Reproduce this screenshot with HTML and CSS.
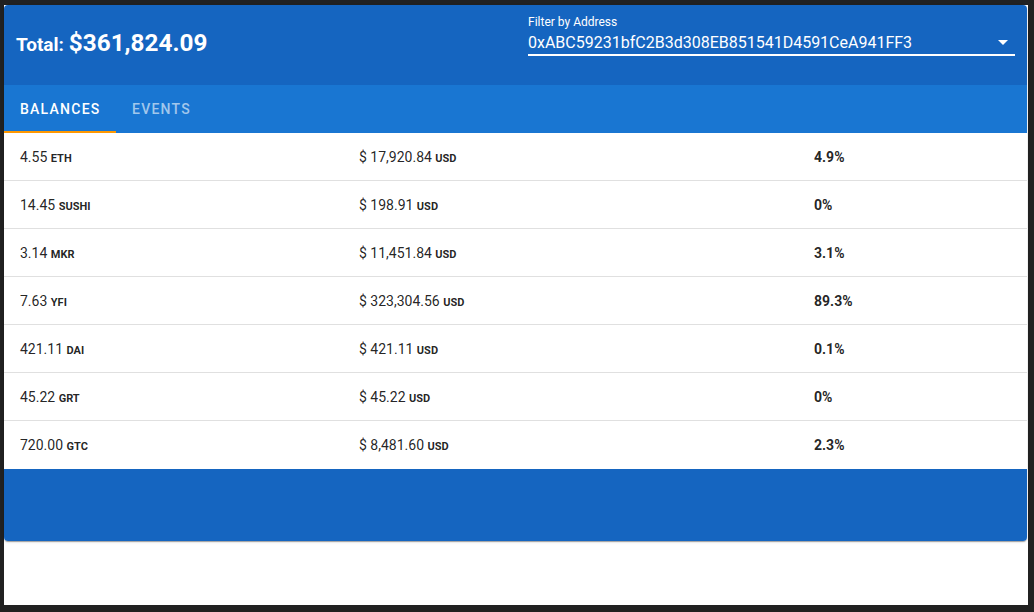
FILE: index.html
```html
<!DOCTYPE html>
<html>
<head>
<meta charset="utf-8">
<link rel="stylesheet" href="styles.css">
</head>
<body>
<div class="page">
  <div class="card">
    <header class="topbar">
      <div class="total"><span class="total-label">Total:</span> <span class="total-value">$361,824.09</span></div>
      <div class="filter">
        <div class="filter-label">Filter by Address</div>
        <div class="select">
          <span class="select-value">0xABC59231bfC2B3d308EB851541D4591CeA941FF3</span>
          <svg class="arrow" width="10" height="5" viewBox="0 0 10 5"><path d="M0 0h10L5 5z" fill="#fff"/></svg>
        </div>
      </div>
    </header>
    <nav class="tabs">
      <div class="tab active">BALANCES</div>
      <div class="tab">EVENTS</div>
    </nav>
    <div class="rows">
      <div class="row"><div>4.55 <b class="unit">ETH</b></div><div>$ 17,920.84 <b class="unit">USD</b></div><div class="pct">4.9%</div></div>
      <div class="row"><div>14.45 <b class="unit">SUSHI</b></div><div>$ 198.91 <b class="unit">USD</b></div><div class="pct">0%</div></div>
      <div class="row"><div>3.14 <b class="unit">MKR</b></div><div>$ 11,451.84 <b class="unit">USD</b></div><div class="pct">3.1%</div></div>
      <div class="row"><div>7.63 <b class="unit">YFI</b></div><div>$ 323,304.56 <b class="unit">USD</b></div><div class="pct">89.3%</div></div>
      <div class="row"><div>421.11 <b class="unit">DAI</b></div><div>$ 421.11 <b class="unit">USD</b></div><div class="pct">0.1%</div></div>
      <div class="row"><div>45.22 <b class="unit">GRT</b></div><div>$ 45.22 <b class="unit">USD</b></div><div class="pct">0%</div></div>
      <div class="row last"><div>720.00 <b class="unit">GTC</b></div><div>$ 8,481.60 <b class="unit">USD</b></div><div class="pct">2.3%</div></div>
    </div>
    <footer class="footer"></footer>
  </div>
</div>
</body>
</html>
```

FILE: styles.css
```css
html { background: #212121; }
body {
  margin: 0;
  padding: 5px 6px 7px 4px;
  font-family: Roboto, "Liberation Sans", sans-serif;
}
.page {
  background: #fff;
  height: 600px;
}
.card {
  border-radius: 4px;
  overflow: hidden;
  box-shadow: 0 2px 1px -1px rgba(0,0,0,.2), 0 1px 1px 0 rgba(0,0,0,.14), 0 1px 3px 0 rgba(0,0,0,.12);
  margin-right: 1px;
}
.topbar {
  background: #1565c0;
  height: 80px;
  display: flex;
  align-items: flex-start;
  justify-content: space-between;
  color: #fff;
}
.total {
  padding: 26px 0 0 12px;
  font-weight: 700;
  line-height: 24px;
  word-spacing: 1px;
}
.total-label { font-size: 19px; }
.total-value { font-size: 24.3px; }
.filter {
  width: 487px;
  margin-right: 12px;
  padding-top: 10px;
}
.filter-label {
  font-size: 12px;
  line-height: 14px;
  color: #fff;
}
.select {
  display: flex;
  align-items: center;
  justify-content: space-between;
  border-bottom: 2px solid #fff;
  height: 24px;
  padding-bottom: 0;
  margin-top: 1px;
}
.select-value {
  font-size: 16px;
}
.arrow { margin-right: 7px; }
.tabs {
  background: #1976d2;
  height: 48px;
  display: flex;
}
.tab {
  width: 112px;
  box-sizing: border-box;
  padding: 1px 0 0 16px;
  font-size: 14px;
  font-weight: 500;
  letter-spacing: 1.25px;
  line-height: 47px;
  color: rgba(255,255,255,.6);
}
.tab.active {
  color: #fff;
  box-shadow: inset 0 -2px 0 #ff9800;
}
.row {
  display: grid;
  grid-template-columns: 339px 455px 1fr;
  height: 48px;
  box-sizing: border-box;
  border-bottom: 1px solid #e0e0e0;
  align-items: center;
  font-size: 14px;
  color: rgba(0,0,0,.87);
}
.row.last { border-bottom: none; }
.row > div { padding-left: 16px; }
.unit {
  font-size: 11px;
  font-weight: 700;
}
.pct { font-weight: 700; font-size: 14px; }
.footer {
  background: #1565c0;
  height: 72px;
}
```
